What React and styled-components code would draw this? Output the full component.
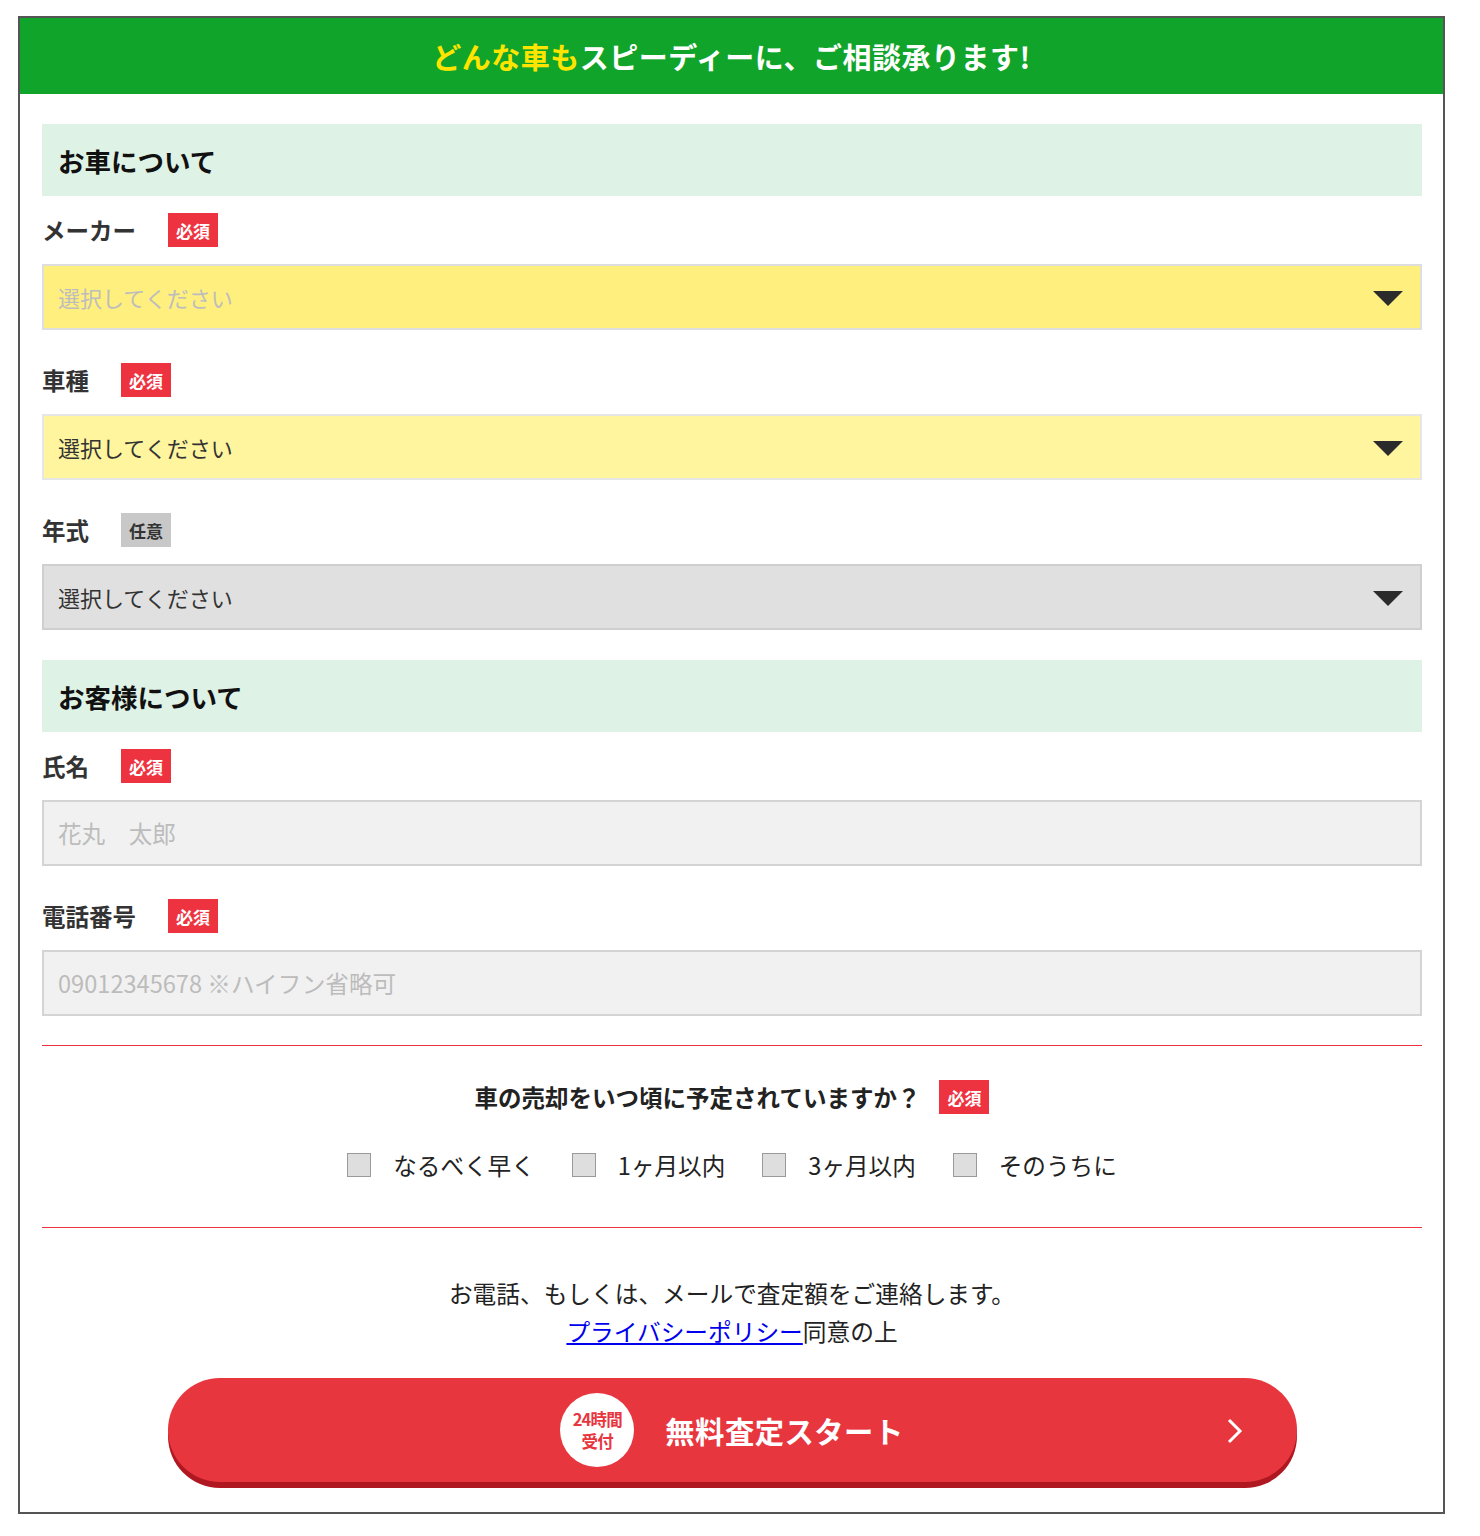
import React from "react";
import styled, { createGlobalStyle } from "styled-components";

const Global = createGlobalStyle`
  html, body { margin: 0; padding: 0; background: #fff; }
  body { font-family: "Noto Sans CJK JP", "Noto Sans", sans-serif; color: #222; }
  * { box-sizing: border-box; }
`;

const Frame = styled.div`
  width: 1427px;
  margin: 16px 0 0 18px;
  border: 2px solid #555;
  background: #fff;
`;

const Banner = styled.div`
  height: 76px;
  background: #11a42a;
  display: flex;
  align-items: center;
  justify-content: center;
  font-size: 29px;
  font-weight: 700;
  color: #fff;
  letter-spacing: 0.5px;
`;

const Yellow = styled.span`
  color: #ffe400;
`;

const Body = styled.div`
  padding: 30px 21px 24px 22px;
`;

const SectionHead = styled.h2`
  margin: ${(p) => (p.$first ? "0" : "30px")} 0 0;
  height: 72px;
  background: #dff2e6;
  display: flex;
  align-items: center;
  padding-left: 16px;
  font-size: 26.5px;
  font-weight: 700;
  color: #111;
`;

const Field = styled.div`
  margin-top: ${(p) => (p.$first ? "17px" : "33px")};
`;

const LabelRow = styled.div`
  height: 34px;
  display: flex;
  align-items: center;
  gap: 32px;
  margin-bottom: 17px;
`;

const Label = styled.span`
  font-size: 23.5px;
  font-weight: 700;
  color: #333;
`;

const Badge = styled.span`
  display: inline-flex;
  align-items: center;
  justify-content: center;
  width: 50px;
  height: 34px;
  font-size: 17px;
  font-weight: 700;
  color: ${(p) => (p.$optional ? "#333" : "#fff")};
  background: ${(p) => (p.$optional ? "#c8c8c8" : "#ee3340")};
`;

const SelectWrap = styled.div`
  position: relative;
  height: 66px;
`;

const Select = styled.select`
  appearance: none;
  -webkit-appearance: none;
  width: 100%;
  height: 66px;
  border: 2px solid ${(p) => p.$border};
  background: ${(p) => p.$bg};
  color: ${(p) => p.$color};
  font-family: "Noto Sans CJK JP", "Noto Sans", sans-serif;
  font-size: 22px;
  padding: 0 60px 0 14px;
  border-radius: 0;
  outline: none;
`;

const Arrow = styled.svg`
  position: absolute;
  right: 19px;
  top: 27px;
  width: 30px;
  height: 15px;
  pointer-events: none;
`;

const TextInput = styled.input`
  width: 100%;
  height: 66px;
  border: 2px solid #d4d4d4;
  background: #f1f1f1;
  font-family: "Noto Sans CJK JP", "Noto Sans", sans-serif;
  font-size: 23.6px;
  padding: 0 14px;
  outline: none;
  &::placeholder { color: #bcbcbc; }
`;

const Rule = styled.hr`
  margin: ${(p) => p.$margin};
  border: none;
  height: 1px;
  background: #ee3340;
`;

const TimingBox = styled.div`
  padding: 34px 0 45px;
`;

const Question = styled.div`
  height: 34px;
  display: flex;
  align-items: center;
  justify-content: center;
  gap: 19px;
  font-size: 23.5px;
  font-weight: 700;
  color: #222;
`;

const Choices = styled.div`
  margin-top: 34px;
  height: 34px;
  display: flex;
  justify-content: center;
  align-items: center;
  gap: 37px;
`;

const Choice = styled.label`
  display: flex;
  align-items: center;
  gap: 22px;
  font-size: 23.6px;
  color: #222;
`;

const Check = styled.input`
  appearance: none;
  -webkit-appearance: none;
  margin: 0;
  width: 24px;
  height: 24px;
  background: #dedede;
  border: 1px solid #9a9a9a;
`;

const Notice = styled.p`
  margin: 46px 0 0;
  text-align: center;
  font-size: 23.7px;
  line-height: 38px;
  color: #222;
`;

const PolicyLink = styled.a`
  color: #0000ee;
  text-decoration: underline;
`;

const Submit = styled.button`
  position: relative;
  display: flex;
  align-items: center;
  justify-content: center;
  gap: 31px;
  width: 1129px;
  height: 104px;
  margin: 28px auto 6px;
  border: none;
  border-radius: 52px;
  background: #e8363f;
  box-shadow: 0 6px 0 #af1721;
  color: #fff;
  font-family: "Noto Sans CJK JP", "Noto Sans", sans-serif;
  font-size: 29.3px;
  font-weight: 700;
  letter-spacing: 0.5px;
  cursor: pointer;
`;

const Seal = styled.span`
  width: 74px;
  height: 74px;
  border-radius: 50%;
  background: #fff;
  color: #e8363f;
  display: flex;
  flex-direction: column;
  align-items: center;
  justify-content: center;
  font-size: 16.5px;
  font-weight: 700;
  line-height: 22px;
  letter-spacing: -0.8px;
`;

const SealLine = styled.span`
  display: block;
  height: 22px;
`;

const Chevron = styled.svg`
  position: absolute;
  right: 54px;
  top: 40px;
  width: 16px;
  height: 26px;
`;

const DownArrow = () => (
  <Arrow viewBox="0 0 30 15">
    <path d="M0 0 H30 L15 15 Z" fill="#2b2b2b" />
  </Arrow>
);

const SelectField = ({ label, optional, first, bg, border, color }) => (
  <Field $first={first}>
    <LabelRow>
      <Label>{label}</Label>
      <Badge $optional={optional}>{optional ? "任意" : "必須"}</Badge>
    </LabelRow>
    <SelectWrap>
      <Select $bg={bg} $border={border} $color={color} defaultValue="">
        <option value="">選択してください</option>
      </Select>
      <DownArrow />
    </SelectWrap>
  </Field>
);

const InputField = ({ label, first, placeholder }) => (
  <Field $first={first}>
    <LabelRow>
      <Label>{label}</Label>
      <Badge>必須</Badge>
    </LabelRow>
    <TextInput placeholder={placeholder} />
  </Field>
);

const choices = ["なるべく早く", "1ヶ月以内", "3ヶ月以内", "そのうちに"];

export default function App() {
  return (
    <>
      <Global />
      <Frame>
        <Banner>
          <Yellow>どんな車も</Yellow>スピーディーに、ご相談承ります!
        </Banner>
        <Body>
          <SectionHead $first>お車について</SectionHead>
          <SelectField label="メーカー" first bg="#ffef7f" border="#dedede" color="#bdbdbd" />
          <SelectField label="車種" bg="#fff59f" border="#e6e6e6" color="#333" />
          <SelectField label="年式" optional bg="#e0e0e0" border="#cfcfcf" color="#333" />

          <SectionHead>お客様について</SectionHead>
          <InputField label="氏名" first placeholder="花丸　太郎" />
          <InputField label="電話番号" placeholder="09012345678 ※ハイフン省略可" />

          <Rule $margin="29px 0 0" />
          <TimingBox>
            <Question>
              車の売却をいつ頃に予定されていますか？
              <Badge>必須</Badge>
            </Question>
            <Choices>
              {choices.map((c) => (
                <Choice key={c}>
                  <Check type="checkbox" />
                  {c}
                </Choice>
              ))}
            </Choices>
          </TimingBox>
          <Rule $margin="0" />

          <Notice>
            お電話、もしくは、メールで査定額をご連絡します。
            <br />
            <PolicyLink href="#">プライバシーポリシー</PolicyLink>同意の上
          </Notice>

          <Submit type="button">
            <Seal>
              <SealLine>24時間</SealLine>
              <SealLine>受付</SealLine>
            </Seal>
            無料査定スタート
            <Chevron viewBox="0 0 16 26">
              <path d="M2 2 L13 13 L2 24" fill="none" stroke="#fff" strokeWidth="3" />
            </Chevron>
          </Submit>
        </Body>
      </Frame>
    </>
  );
}
